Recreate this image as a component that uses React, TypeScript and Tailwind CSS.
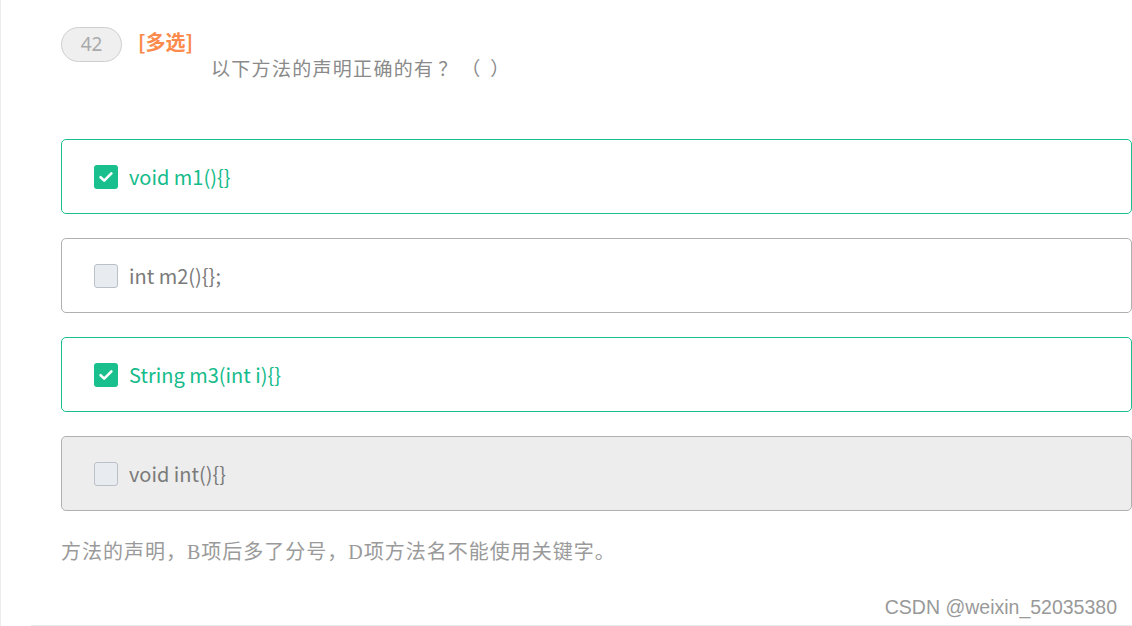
import React from 'react';

const options = [
  { label: 'void m1(){}', state: 'checked' },
  { label: 'int m2(){};', state: 'empty' },
  { label: 'String m3(int i){}', state: 'checked' },
  { label: 'void int(){}', state: 'disabled' },
];

const boxClass = {
  checked:
    'flex items-center h-[75px] w-[1071px] rounded-[5px] border border-solid border-[#1bbf8f] bg-white pl-[32px]',
  empty:
    'flex items-center h-[75px] w-[1071px] rounded-[5px] border border-solid border-[#b0b0b0] bg-white pl-[32px]',
  disabled:
    'flex items-center h-[75px] w-[1071px] rounded-[5px] border border-solid border-[#b0b0b0] bg-[#ededed] pl-[32px]',
};

function CheckIcon() {
  return (
    <svg width="16" height="16" viewBox="0 0 16 16" fill="none">
      <path d="M2.6 8.2 L6.2 11.6 L13.4 4.4" stroke="white" strokeWidth="2.6" strokeLinecap="round" strokeLinejoin="round" />
    </svg>
  );
}

function Option({ label, state }) {
  const checked = state === 'checked';
  return (
    <div className={boxClass[state]}>
      {checked ? (
        <span className="flex items-center justify-center w-[24px] h-[24px] rounded-[3px] bg-[#19c08e]">
          <CheckIcon />
        </span>
      ) : (
        <span className="w-[24px] h-[24px] rounded-[3px] border border-solid border-[#b9c0c7] bg-[#e8ecf0]"></span>
      )}
      <span
        className={
          checked
            ? 'ml-[11px] text-[20px] leading-[24px] text-[#14bb8a]'
            : 'ml-[11px] text-[20px] leading-[24px] text-[#7a7a7a]'
        }
        style={{ fontFamily: '"Noto Sans CJK SC", "Noto Sans", sans-serif' }}
      >
        {label}
      </span>
    </div>
  );
}

export default function App() {
  return (
    <div className="relative w-[1132px] h-[626px] bg-white border-l border-solid border-[#ececec] overflow-hidden">
      <div className="pl-[60px] pt-[27px]">
        <div className="flex items-start">
          <div
            className="flex items-center justify-center w-[61px] h-[35px] rounded-full border border-solid border-[#cfcfcf] bg-[#efefef] text-[19px] text-[#aaa]"
            style={{ fontFamily: '"Noto Sans", sans-serif' }}
          >
            42
          </div>
          <div
            className="ml-[16px] mt-[2px] text-[20px] leading-[26px] font-bold text-[#fb8a4c]"
            style={{ fontFamily: '"Noto Sans CJK SC", sans-serif' }}
          >
            [多选]
          </div>
        </div>
        <p
          className="flex pl-[150px] mt-[-6px] text-[19px] leading-[24px] text-[#8a8a8a]"
          style={{ fontFamily: '"Noto Sans CJK SC", sans-serif' }}
        >
          <span className="tracking-[1.3px]">以下方法的声明正确的有</span>
          <span className="ml-[4px] w-[19px] text-center">？</span>
          <span className="ml-[4px] w-[19px] text-right">（</span>
          <span className="ml-[10px] w-[19px] text-left">）</span>
        </p>

        <div className="mt-[59px] flex flex-col gap-[24px]">
          {options.map((o) => (
            <Option key={o.label} {...o} />
          ))}
        </div>

        <p
          className="mt-[28px] text-[20px] leading-[26px] tracking-[1px] text-[#9a9a9a]"
          style={{ fontFamily: '"Liberation Serif", "Noto Sans CJK SC", serif' }}
        >
          方法的声明，B项后多了分号，D项方法名不能使用关键字。
        </p>
      </div>

      <div
        className="absolute right-[15px] top-[594px] text-[19.5px] leading-[26px] text-[#999]"
        style={{ fontFamily: '"Liberation Sans", sans-serif' }}
      >
        CSDN @weixin_52035380
      </div>
      <div className="absolute left-[30px] right-0 bottom-0 h-px bg-[#eaeaea]"></div>
    </div>
  );
}
